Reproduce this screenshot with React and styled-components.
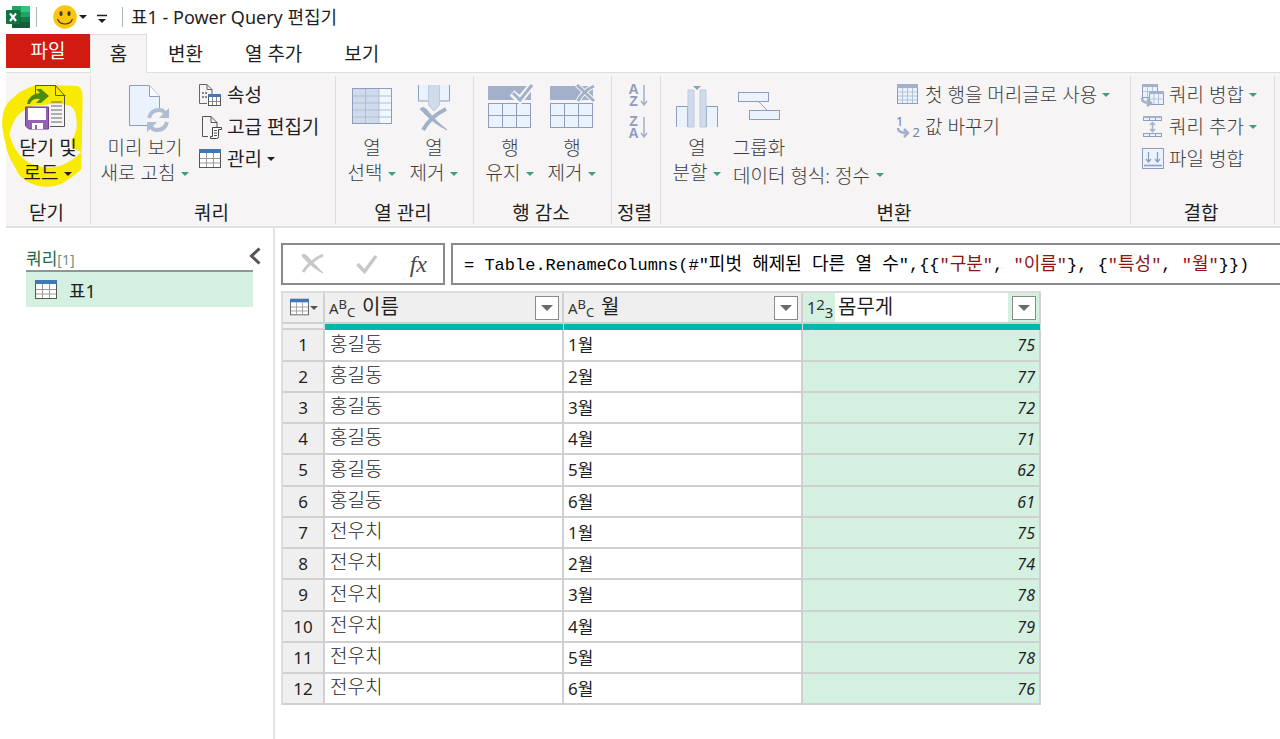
import React from "react";
import styled, { createGlobalStyle } from "styled-components";

const GlobalStyle = createGlobalStyle`
  * {
    box-sizing: border-box;
  }
  body {
    margin: 0;
    background: #fff;
    color: #1f1f1f;
    font-family: "Noto Sans", "Noto Sans CJK KR", sans-serif;
    font-size: 19px;
    overflow: hidden;
  }
  button, input {
    font: inherit;
    color: inherit;
    margin: 0;
    padding: 0;
    border: 0;
    background: none;
  }
  svg {
    display: block;
    flex: none;
  }
`;

const Window = styled.div`
  display: flex;
  flex-direction: column;
  min-height: 100vh;
`;

/* title bar */

const TitleBar = styled.header`
  display: flex;
  align-items: center;
  height: 34px;
  padding-left: 6px;
`;

const BarDivider = styled.span`
  width: 1px;
  height: 20px;
  margin-left: ${(props) => props.$left}px;
  background: #a9b8b2;
`;

const QuickButton = styled.button`
  display: flex;
  align-items: center;
  gap: 2px;
  margin-left: ${(props) => props.$left}px;
`;

const WindowTitle = styled.h1`
  margin: 0 0 0 8px;
  font-size: 18px;
  font-weight: 400;
  line-height: 24px;
`;

const Caret = styled.span`
  flex: none;
  border: 4px solid transparent;
  border-top: 4px solid ${(props) => props.$color || "#1f1f1f"};
  border-bottom: 0;
`;

/* ribbon tabs */

const Tabs = styled.nav`
  display: flex;
  height: 38px;
  padding-left: 6px;
`;

const FileTab = styled.button`
  width: 84px;
  height: 34px;
  background: #d11a12;
  color: #fff;
  line-height: 34px;
`;

const Tab = styled.button`
  height: 39px;
  min-width: 57px;
  padding: 0 ${(props) => (props.$active ? 0 : 20)}px;
  line-height: 37px;
  background: ${(props) => (props.$active ? "#f6f4f5" : "transparent")};
  border: solid ${(props) => (props.$active ? "#dedcdd" : "transparent")};
  border-width: 1px 1px 0;
  z-index: 1;
`;

/* ribbon */

const Ribbon = styled.section`
  display: flex;
  margin-left: 6px;
  padding: 3px 5px 2px 0;
  border-top: 1px solid #e0dedf;
  border-bottom: 2px solid #e2e0e1;
  background: #f6f4f5;
`;

const Group = styled.div`
  position: relative;
  display: flex;
  flex-direction: column;
  flex: ${(props) => (props.$grow ? "1 0 auto" : "none")};
  width: ${(props) => props.$width}px;
  border-right: 1px solid #dfdddf;
`;

const GroupBody = styled.div`
  display: flex;
  justify-content: ${(props) => (props.$center ? "center" : "flex-start")};
  height: 123px;
  padding-left: ${(props) => (props.$center ? 0 : 5)}px;
`;

const GroupName = styled.div`
  height: 25px;
  padding-right: 3px;
  line-height: 28px;
  text-align: center;
  white-space: nowrap;
`;

const BigButton = styled.button`
  display: flex;
  flex-direction: column;
  align-items: center;
  position: relative;
  width: ${(props) => props.$width || 62}px;
  padding-top: 8px;
  line-height: 25px;
  white-space: nowrap;
  font-weight: ${(props) => (props.disabled ? 300 : 400)};
  color: ${(props) => (props.disabled ? "#3c3c3c" : "#1f1f1f")};
`;

const BigIcon = styled.span`
  height: 52px;
`;

const Line = styled.span`
  display: flex;
  align-items: center;
  gap: 6px;
  height: 25px;
`;

const Column = styled.div`
  display: flex;
  flex-direction: column;
  align-items: flex-start;
  padding: 3px 0 0 ${(props) => props.$left || 4}px;
`;

const SmallButton = styled.button`
  display: flex;
  align-items: center;
  gap: 5px;
  height: 32px;
  line-height: 32px;
  white-space: nowrap;
  font-weight: ${(props) => (props.disabled ? 300 : 400)};
  color: ${(props) => (props.disabled ? "#3c3c3c" : "#1f1f1f")};
`;

const Stack = styled.div`
  display: flex;
  flex-direction: column;
  align-items: flex-start;
  width: 160px;
`;

const TypeButton = styled.button`
  display: flex;
  align-items: center;
  gap: 6px;
  padding-left: 5px;
  height: 28px;
  font-weight: 300;
  color: #3c3c3c;
  white-space: nowrap;
`;

const Highlight = styled.svg`
  position: absolute;
  left: -4px;
  top: 9px;
`;

/* body */

const Main = styled.main`
  display: flex;
  flex: 1;
`;

const QueryPane = styled.aside`
  width: 275px;
  padding: 16px 20px 0 26px;
  border-right: 2px solid #e2e2e2;
`;

const PaneHead = styled.div`
  display: flex;
  justify-content: space-between;
  height: 26px;
  margin-right: -8px;
`;

const PaneTitle = styled.h2`
  margin: 0;
  font-size: 17px;
  font-weight: 400;
  line-height: 30px;
  color: #1d6b45;
  small {
    font-size: 14px;
    color: #6d8f7f;
  }
`;

const CollapseButton = styled.button`
  height: 24px;
`;

const QueryItem = styled.a`
  display: flex;
  align-items: center;
  gap: 11px;
  height: 37px;
  padding-left: 8px;
  border-top: 2px solid #8f9793;
  background: #d4f0e1;
  color: #1f1f1f;
  font-size: 18px;
  text-decoration: none;
`;

const Editor = styled.div`
  flex: 1;
  min-width: 0;
  padding: 15px 0 0 6px;
`;

const FormulaBar = styled.div`
  display: flex;
  gap: 6px;
  height: 42px;
`;

const FormulaTools = styled.div`
  display: flex;
  align-items: center;
  justify-content: space-between;
  width: 164px;
  padding: 0 16px 0 18px;
  border: 2px solid #8a8a8a;
`;

const FxButton = styled.button`
  font-family: "Liberation Serif", serif;
  font-style: italic;
  font-size: 24px;
  line-height: 30px;
  color: #4a4a4a;
`;

const Formula = styled.div`
  flex: 1;
  padding-left: 11px;
  border: 2px solid #8a8a8a;
  border-right: 0;
  font-family: "Liberation Mono", "Noto Sans CJK KR", monospace;
  font-size: 17px;
  line-height: 40px;
  white-space: pre;
  color: #000;
`;

const Str = styled.span`
  color: #8e1414;
`;

const Ko = styled.span`
  font-size: 18px;
`;

/* data grid */

const Grid = styled.table`
  width: 760px;
  margin-top: 6px;
  table-layout: fixed;
  border-collapse: separate;
  border-spacing: 0;
  border: solid #dcdcdc;
  border-width: 2px 0 0 2px;
  th, td {
    padding: 0;
    font-weight: 400;
    border: solid #d0d0d0;
    border-width: 0 2px 2px 0;
  }
  tbody tr {
    height: 31px;
  }
  tbody tr:nth-child(4n + 1) {
    height: 32px;
  }
`;

const HeadCell = styled.th`
  height: 31px;
  background: ${(props) => (props.$selected ? "#d4f0e1" : "#efefef")};
`;

const HeadInner = styled.div`
  display: flex;
  align-items: center;
  height: 29px;
  padding: 0 3px 0 ${(props) => (props.$corner ? 6 : 4)}px;
`;

const NameInput = styled.input`
  flex: 1;
  min-width: 0;
  height: 29px;
  padding-left: ${(props) => (props.$selected ? 3 : 10)}px;
  padding-bottom: 4px;
  margin-right: 4px;
  font-size: 20px;
  background: ${(props) => (props.$selected ? "#fff" : "transparent")};
`;

const FilterButton = styled.button`
  display: flex;
  align-items: center;
  justify-content: center;
  width: 24px;
  height: 24px;
  border: 1px solid #8a8a8a;
  background: #fff;
`;

const FilterCaret = styled(Caret)`
  border-width: 6px 6px 0;
  border-top-color: #6a6a6a;
`;

const TypeMark = styled.span`
  display: flex;
  align-items: center;
  width: ${(props) => (props.$number ? 28 : 23)}px;
  height: 22px;
  font-size: ${(props) => (props.$number ? 16 : 15)}px;
  line-height: 18px;
  color: #333;
  i {
    font-style: normal;
  }
  i:nth-child(n + 2) {
    font-size: ${(props) => (props.$number ? 15 : 13)}px;
    line-height: 14px;
  }
  i:nth-child(2) {
    align-self: flex-start;
  }
  i:nth-child(3) {
    align-self: flex-end;
  }
`;

const Quality = styled.td`
  height: 6px;
  background: ${(props) => (props.$index ? "#f2f2f2" : "#01b8aa")};
  &&& {
    border-bottom-width: ${(props) => (props.$index ? 2 : 0)}px;
    border-right-width: ${(props) => (props.$index ? 2 : 1)}px;
    border-right-color: #dcdcdc;
  }
`;

const Index = styled.th`
  background: #efefef;
  font-size: 17px;
  line-height: 24px;
  text-align: center;
`;

const Name = styled.td`
  font-size: 19px;
  line-height: 24px;
  &&& {
    padding: 0 0 3px 5px;
    font-weight: 300;
  }
`;

const Month = styled.td`
  font-size: 17px;
  line-height: 24px;
  padding-left: 4px;
  &&& {
    padding-left: 4px;
  }
`;

const Weight = styled.td`
  background: #d4f0e1;
  font-size: 16px;
  font-style: italic;
  line-height: 24px;
  text-align: right;
  &&& {
    padding-right: 4px;
  }
`;

const GREEN = "#3f9c7c";
const LINE = "#8d9dbb";
const PALE = "#eaf3fd";
const STEEL = "#a2b0ca";

const ExcelLogo = () => (
  <svg width="24" height="24" viewBox="0 0 24 24">
    <rect x="6" y="1" width="18" height="22" rx="1" fill="#21a366" />
    <rect x="15" y="1" width="9" height="6" fill="#33c481" />
    <rect x="6" y="7" width="9" height="6" fill="#107c41" />
    <rect x="15" y="12" width="9" height="5" fill="#107c41" />
    <path d="M6 13h9v4h9v5q0 1-1 1H7q-1 0-1-1z" fill="#185c37" />
    <rect y="5" width="14" height="14" rx="1" fill="#0e7440" />
    <path d="M4 8.500l6 7.500M10 8.500L4 16" stroke="#fff" strokeWidth="2.200" />
  </svg>
);

const Smiley = () => (
  <svg width="24" height="24" viewBox="0 0 24 24">
    <circle cx="12" cy="12" r="11.8" fill="#fcc60d" />
    <ellipse cx="8" cy="8.500" rx="1.600" ry="2.500" fill="#3c3a36" />
    <ellipse cx="16" cy="8.500" rx="1.600" ry="2.500" fill="#3c3a36" />
    <path d="M4.500 14q2 5 7.500 5t7.500-5" fill="none" stroke="#3c3a36" strokeWidth="1.200" />
  </svg>
);

const TableIcon = ({ size = 24 }) => (
  <svg width={size} height={size === 24 ? 22 : 19} viewBox="0 0 24 22">
    <rect x="1.500" y="1.500" width="21" height="18" fill="#fff" stroke="#555" />
    <path d="M8.500 5v14M15.500 5v14M2 10.500h20M2 15h20" stroke="#999" />
    <rect x="1" y="1" width="22" height="4" fill="#3f78b4" />
  </svg>
);

const CloseLoadIcon = () => (
  <svg width="48" height="48" viewBox="0 0 48 48">
    <path d="M11.500 12V1.500h20l9 10v31H26" fill="none" stroke="#555" />
    <path d="M31.500 1.500v10h10" fill="none" stroke="#555" />
    <path d="M27 18h11M27 22h11M27 26h11M27 30h11M27 34h11M27 38h11" stroke="#666" />
    <path d="M3 20q2-10 13-11l-4-4h5l8 7-8 7h-5l4-4q-8-1-10 5z" fill="#4a8a10" />
    <path d="M1.500 23h23v22H5l-3.500-3z" fill="#9560b4" stroke="#6f3f92" />
    <rect x="4" y="24" width="18" height="12" fill="#fff" />
    <path d="M8 39h11v6h-6v-4h-2v4H8z" fill="#fff" />
  </svg>
);

const RefreshIcon = () => (
  <svg width="52" height="48" viewBox="-8 0 52 48">
    <path d="M2.500 1.500h20l10 11v29h-30z" fill={PALE} stroke={LINE} />
    <path d="M22.500 1.500v11h10" fill="#f8fbff" stroke={LINE} />
    <circle cx="31" cy="36" r="12" fill="#f6f4f5" />
    <path d="M22 34q2-8 10-8 4 0 6 3M40 38q-2 8-10 8-4 0-6-3" fill="none" stroke="#afbdd3" strokeWidth="4" />
    <path d="M42 24v10H32zM20 48V38h10z" fill="#afbdd3" />
  </svg>
);

const PropsIcon = () => (
  <svg width="24" height="24" viewBox="0 0 24 24">
    <path d="M9 20.500H1.500v-19H9l5 5V11M9 1.500v5h5" fill="none" stroke="#666" />
    <path d="M4 10h2M4 14h2M7 10h2M7 14h2" stroke="#888" strokeWidth="2" />
    <rect x="10.500" y="11.500" width="12" height="11" fill="#fff" stroke="#555" />
    <path d="M14.500 14v8M18.500 14v8M11 18.500h11" stroke="#888" />
    <rect x="10" y="11" width="13" height="3" fill="#3f78b4" />
  </svg>
);

const AdvancedIcon = () => (
  <svg width="24" height="24" viewBox="0 0 24 24">
    <path d="M10 21.500H4.500v-20H13l6 6V12M13 1.500v6h6" fill="none" stroke="#555" />
    <path d="M14.500 12.500h9v2h-3v7q0 2-2 2h-6v-2h2z" fill="#fff" stroke="#444" />
    <path d="M16 15.500h3M16 18h3M16 20.500h3" stroke="#555" />
  </svg>
);

const ChooseColumnsIcon = () => (
  <svg width="42" height="48" viewBox="0 0 42 48">
    <rect x="1.500" y="4.500" width="39" height="35" fill="#f1f7fe" stroke={LINE} />
    <rect x="2" y="5" width="26" height="34" fill="#cfdaea" />
    <path d="M2 12h38M2 19h38M2 26h38M2 33h38" stroke="#aebed6" />
    <path d="M14.500 5v34M28 5v34" stroke="#aebed6" />
  </svg>
);

const RemoveColumnsIcon = () => (
  <svg width="34" height="48" viewBox="0 0 34 48">
    <path d="M1.500 1v16h10V1M22 1v16h10.500V1" fill={PALE} stroke={LINE} />
    <path d="M11.500 1v20l5.500 6 5.500-6V1" fill="#cfdaea" stroke="#bccbe0" />
    <path d="M3 25q3-3 6 0 9 12 21 21-14-7-25-19z" fill={STEEL} stroke={STEEL} />
    <path d="M29 25Q14 32 6 46" fill="none" stroke={STEEL} strokeWidth="4" />
  </svg>
);

const RowsIcon = ({ remove }) => (
  <svg width="46" height="48" viewBox="0 0 46 48">
    <rect x="1" y="2" width="43" height="14" fill={STEEL} />
    <rect x="1.500" y="19.500" width="42" height="24" fill={PALE} stroke={LINE} />
    <path d="M15.500 19v24M29.500 19v24M1 31.500h43" stroke={LINE} />
    {remove ? (
      <>
        <path d="M28 1l17 16M45 2Q34 7 29 17" fill="none" stroke="#f6f4f5" strokeWidth="5" />
        <path d="M28 1l17 16M45 2Q34 7 29 17" fill="none" stroke={STEEL} strokeWidth="3" />
      </>
    ) : (
      <>
        <path d="M25 9l8 7L45 1" fill="none" stroke="#f6f4f5" strokeWidth="7" />
        <path d="M26 9l7 7L45 1" fill="none" stroke={STEEL} strokeWidth="3" />
      </>
    )}
  </svg>
);

const SortMark = styled.span`
  display: flex;
  align-items: center;
  gap: 1px;
  font-family: "Liberation Sans", sans-serif;
  font-size: 14px;
  font-weight: 700;
  line-height: 12px;
  color: ${LINE};
`;

const SortLetters = styled.span`
  display: flex;
  flex-direction: column;
  align-items: center;
`;

const SortIcon = ({ letters }) => (
  <SortMark>
    <SortLetters>
      <span>{letters[0]}</span>
      <span>{letters[1]}</span>
    </SortLetters>
    <svg width="8" height="24" viewBox="0 0 8 24">
      <path d="M4 2v20M1 18l3 4 3-4" fill="none" stroke={STEEL} strokeWidth="1.500" />
    </svg>
  </SortMark>
);

const SplitIcon = () => (
  <svg width="44" height="48" viewBox="0 0 44 48">
    <path d="M1.500 43V22.500h11V43M31.500 43V22.500h11V43" fill={PALE} stroke={LINE} />
    <path d="M13 43V6h6v37zM25 43V6h6v37z" fill="#cfdaea" stroke="#bccbe0" />
    <path d="M18 2h8l-4 4z" fill={LINE} />
  </svg>
);

const GroupIcon = () => (
  <svg width="44" height="48" viewBox="0 0 44 48">
    <path d="M22 18l9 9" stroke={LINE} />
    <rect x="1.500" y="8.500" width="30" height="9" fill={PALE} stroke={LINE} />
    <rect x="12.500" y="26.500" width="30" height="9" fill={PALE} stroke={LINE} />
  </svg>
);

const HeaderRowIcon = () => (
  <svg width="24" height="24" viewBox="0 0 24 24">
    <rect x="1.500" y="1.500" width="20" height="19" fill={PALE} stroke={LINE} />
    <path d="M6.500 2v18M11.500 2v18M16.500 2v18M2 9h19M2 13h19M2 17h19" stroke="#b4c1d8" />
    <rect x="1" y="1" width="21" height="4" fill={STEEL} />
  </svg>
);

const ReplaceMark = styled.span`
  display: flex;
  width: 24px;
  height: 24px;
  font-size: 13px;
  font-weight: 400;
  line-height: 13px;
  color: #7082a6;
  b {
    font-weight: 400;
    align-self: flex-end;
    margin-left: auto;
  }
  svg {
    align-self: flex-end;
    margin-left: -6px;
  }
`;

const ReplaceIcon = () => (
  <ReplaceMark>
    <span>1</span>
    <svg width="14" height="12" viewBox="0 0 14 12">
      <path d="M1 1q0 5 9 5M7 2l4 4-4 4" fill="none" stroke={STEEL} strokeWidth="2.500" />
    </svg>
    <b>2</b>
  </ReplaceMark>
);

const MergeIcon = () => (
  <svg width="24" height="24" viewBox="0 0 24 24">
    <rect x="2.500" y="1.500" width="15" height="13" fill={PALE} stroke={LINE} />
    <path d="M7.500 4v10M12.500 4v10M3 8.500h14" stroke="#b4c1d8" />
    <rect x="2" y="1" width="16" height="3" fill={STEEL} />
    <rect x="9.500" y="8.500" width="14" height="13" fill={PALE} stroke={LINE} />
    <path d="M14 11v10M18.500 11v10M10 16h13" stroke="#b4c1d8" />
    <rect x="9" y="8" width="15" height="3" fill={STEEL} />
    <path d="M2 15q0 5 8 5M7 16l4 4-4 3" fill="none" stroke={STEEL} strokeWidth="2.500" />
  </svg>
);

const AppendIcon = () => (
  <svg width="24" height="24" viewBox="0 0 24 24">
    <rect x="3.500" y="1.500" width="18" height="4" fill={PALE} stroke={LINE} />
    <rect x="3" y="1" width="19" height="2" fill={STEEL} />
    <rect x="3.500" y="18.500" width="18" height="3" fill={PALE} stroke={LINE} />
    <path d="M9.500 3v3M15.500 3v3M9.500 18v3M15.500 18v3" stroke={LINE} />
    <path d="M12.500 8v8M10 10l2.500-2.500L15 10M10 14l2.500 2.500L15 14" fill="none" stroke={STEEL} strokeWidth="1.500" />
  </svg>
);

const CombineIcon = () => (
  <svg width="24" height="24" viewBox="0 0 24 24">
    <rect x="2.500" y="1.500" width="21" height="20" fill={PALE} stroke={LINE} />
    <path d="M8.500 5v10M6 12l2.500 3 2.500-3M17.500 5v10M15 12l2.500 3 2.500-3M4 18.500h18" fill="none" stroke={LINE} strokeWidth="1.300" />
  </svg>
);

const rows = [
  ["홍길동", "1월", 75],
  ["홍길동", "2월", 77],
  ["홍길동", "3월", 72],
  ["홍길동", "4월", 71],
  ["홍길동", "5월", 62],
  ["홍길동", "6월", 61],
  ["전우치", "1월", 75],
  ["전우치", "2월", 74],
  ["전우치", "3월", 78],
  ["전우치", "4월", 79],
  ["전우치", "5월", 78],
  ["전우치", "6월", 76],
];

const Big = ({ icon, lines, width, caret = GREEN, enabled }) => (
  <BigButton $width={width} disabled={!enabled}>
    <BigIcon>{icon}</BigIcon>
    <Line>{lines[0]}</Line>
    {lines[1] && (
      <Line>
        {lines[1]}
        <Caret $color={caret} />
      </Line>
    )}
  </BigButton>
);

const Small = ({ icon, label, caret, enabled }) => (
  <SmallButton disabled={!enabled}>
    {icon}
    {label}
    {caret && <Caret $color={enabled ? "#1f1f1f" : GREEN} />}
  </SmallButton>
);

const ColumnHead = ({ name, marks, selected }) => (
  <HeadCell $selected={selected}>
    <HeadInner>
      <TypeMark $number={selected}>
        {marks.split("").map((m) => (
          <i key={m}>{m}</i>
        ))}
      </TypeMark>
      <NameInput aria-label={name} defaultValue={name} $selected={selected} />
      <FilterButton aria-label={name}>
        <FilterCaret />
      </FilterButton>
    </HeadInner>
  </HeadCell>
);

const App = () => {
  return (
    <Window>
      <GlobalStyle />
      <TitleBar>
        <ExcelLogo />
        <BarDivider $left={6} />
        <QuickButton $left={16} aria-label="smile">
          <Smiley />
          <Caret />
        </QuickButton>
        <QuickButton $left={10} aria-label="customize">
          <svg width="10" height="14" viewBox="0 0 10 14">
            <path d="M0 5.500h10" stroke="#1f1f1f" strokeWidth="1.500" />
            <path d="M1 9h8l-4 4z" fill="#1f1f1f" />
          </svg>
        </QuickButton>
        <BarDivider $left={15} />
        <WindowTitle>표1 - Power Query 편집기</WindowTitle>
      </TitleBar>
      <Tabs>
        <FileTab>파일</FileTab>
        <Tab $active>홈</Tab>
        <Tab>변환</Tab>
        <Tab>열 추가</Tab>
        <Tab>보기</Tab>
      </Tabs>
      <Ribbon>
        <Group $width={85}>
          <Highlight width="81" height="103" viewBox="6 43 242 308">
            <path
              fillRule="evenodd"
              fill="#f8ea00"
              d="M100 46Q170 42 232 46Q246 52 247 75L245 200L243 295Q235 303 215 318Q180 345 150 347Q110 348 90 336Q60 325 45 290Q20 250 16 215Q4 170 7 145Q10 105 32 88Q60 58 100 46ZM28 190Q38 140 70 120Q90 104 130 103Q180 94 212 106Q228 120 229 150Q232 185 214 208Q210 235 243 243Q225 262 205 273Q175 290 145 290Q100 287 75 268Q40 240 28 190Z"
            />
          </Highlight>
          <GroupBody $center>
            <Big icon={<CloseLoadIcon />} lines={["닫기 및", "로드"]} width={80} caret="#1f1f1f" enabled />
          </GroupBody>
          <GroupName>닫기</GroupName>
        </Group>
        <Group $width={245}>
          <GroupBody>
            <Big icon={<RefreshIcon />} lines={["미리 보기", "새로 고침"]} width={98} />
            <Column>
              <Small icon={<PropsIcon />} label="속성" enabled />
              <Small icon={<AdvancedIcon />} label="고급 편집기" enabled />
              <Small icon={<TableIcon />} label="관리" caret enabled />
            </Column>
          </GroupBody>
          <GroupName>쿼리</GroupName>
        </Group>
        <Group $width={138}>
          <GroupBody>
            <Big icon={<ChooseColumnsIcon />} lines={["열", "선택"]} />
            <Big icon={<RemoveColumnsIcon />} lines={["열", "제거"]} />
          </GroupBody>
          <GroupName>열 관리</GroupName>
        </Group>
        <Group $width={138}>
          <GroupBody>
            <Big icon={<RowsIcon />} lines={["행", "유지"]} />
            <Big icon={<RowsIcon remove />} lines={["행", "제거"]} />
          </GroupBody>
          <GroupName>행 감소</GroupName>
        </Group>
        <Group $width={49}>
          <GroupBody $center>
            <Column>
              <Small icon={<SortIcon letters="AZ" />} />
              <Small icon={<SortIcon letters="ZA" />} />
            </Column>
          </GroupBody>
          <GroupName>정렬</GroupName>
        </Group>
        <Group $grow>
          <GroupBody>
            <Big icon={<SplitIcon />} lines={["열", "분할"]} />
            <Stack>
              <Big icon={<GroupIcon />} lines={["그룹화"]} />
              <TypeButton disabled>
                데이터 형식: 정수
                <Caret $color={GREEN} />
              </TypeButton>
            </Stack>
            <Column $left={8}>
              <Small icon={<HeaderRowIcon />} label="첫 행을 머리글로 사용" caret />
              <Small icon={<ReplaceIcon />} label="값 바꾸기" />
            </Column>
          </GroupBody>
          <GroupName>변환</GroupName>
        </Group>
        <Group $width={144}>
          <GroupBody>
            <Column>
              <Small icon={<MergeIcon />} label="쿼리 병합" caret />
              <Small icon={<AppendIcon />} label="쿼리 추가" caret />
              <Small icon={<CombineIcon />} label="파일 병합" />
            </Column>
          </GroupBody>
          <GroupName>결합</GroupName>
        </Group>
      </Ribbon>
      <Main>
        <QueryPane>
          <PaneHead>
            <PaneTitle>
              쿼리<small>[1]</small>
            </PaneTitle>
            <CollapseButton aria-label="collapse">
              <svg width="12" height="18" viewBox="0 0 12 18">
                <path d="M10.500 1.500L2.500 9l8 7.500" fill="none" stroke="#555" strokeWidth="3" />
              </svg>
            </CollapseButton>
          </PaneHead>
          <QueryItem href="#">
            <TableIcon />
            표1
          </QueryItem>
        </QueryPane>
        <Editor>
          <FormulaBar>
            <FormulaTools>
              <button aria-label="cancel">
                <svg width="24" height="22" viewBox="0 0 24 22">
                  <path d="M1 2q2-2 5 1 7 8 16 17Q10 14 1 3z" fill="#c8c8c8" stroke="#c8c8c8" />
                  <path d="M22 2Q9 8 2 19" fill="none" stroke="#c8c8c8" strokeWidth="3" />
                </svg>
              </button>
              <button aria-label="accept">
                <svg width="22" height="20" viewBox="0 0 22 20">
                  <path d="M1.500 10l7 7.500L20 2" fill="none" stroke="#c8c8c8" strokeWidth="3.500" />
                </svg>
              </button>
              <FxButton>fx</FxButton>
            </FormulaTools>
            <Formula>
              = Table.RenameColumns(#"<Ko>피벗</Ko> <Ko>해제된</Ko> <Ko>다른</Ko> <Ko>열</Ko> <Ko>수</Ko>",{"{{"}
              <Str>"<Ko>구분</Ko>"</Str>, <Str>"<Ko>이름</Ko>"</Str>{"}, {"}
              <Str>"<Ko>특성</Ko>"</Str>, <Str>"<Ko>월</Ko>"</Str>{"}})"}
            </Formula>
          </FormulaBar>
          <Grid>
            <colgroup>
              <col width="42" />
              <col width="239" />
              <col width="239" />
              <col />
            </colgroup>
            <thead>
              <tr>
                <HeadCell>
                  <HeadInner $corner>
                    <TableIcon size={21} />
                    <Caret $color="#555" />
                  </HeadInner>
                </HeadCell>
                <ColumnHead name="이름" marks="ABC" />
                <ColumnHead name="월" marks="ABC" />
                <ColumnHead name="몸무게" marks="123" selected />
              </tr>
              <tr>
                <Quality $index />
                <Quality />
                <Quality />
                <Quality />
              </tr>
            </thead>
            <tbody>
              {rows.map(([name, month, weight], i) => (
                <tr key={i}>
                  <Index scope="row">{i + 1}</Index>
                  <Name>{name}</Name>
                  <Month>{month}</Month>
                  <Weight>{weight}</Weight>
                </tr>
              ))}
            </tbody>
          </Grid>
        </Editor>
      </Main>
    </Window>
  );
};

export default App;
